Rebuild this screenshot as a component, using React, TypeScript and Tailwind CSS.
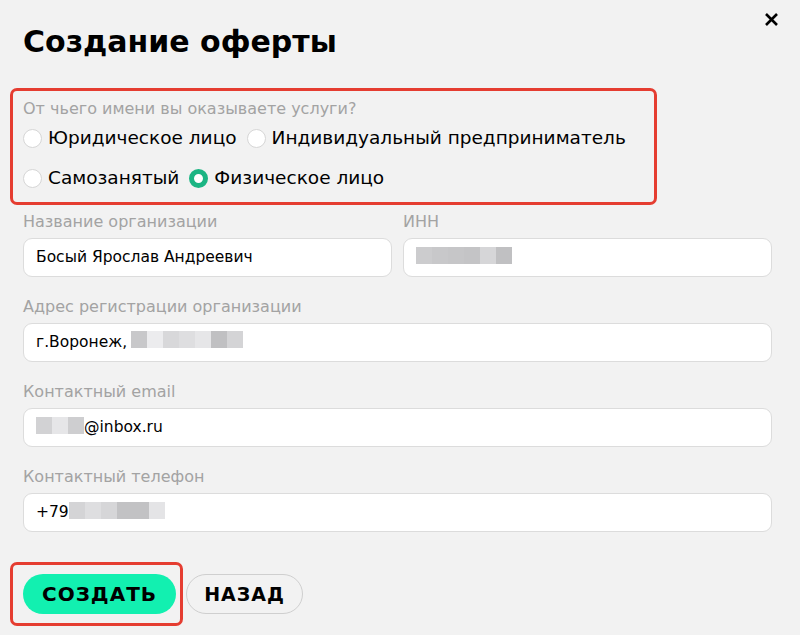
import { useState } from "react";

type Field = {
    key: string;
    label: string;
    value?: string;
};

// pixelated "hidden" chunks in the reference
const Blur = ({ cells }: { cells: number[] }) => (
    <span className="inline-flex align-middle h-[22px]">
        {cells.map((c, i) => (
            <span
                key={i}
                className="w-4 h-[17px] self-start"
                style={{ background: `rgb(${c},${c},${c + 2})` }}
            />
        ))}
    </span>
);

function Input({ field, wide }: { field: Field; wide?: boolean }) {
    return (
        <div className={`flex flex-col ${wide ? "w-full" : "flex-1"}`}>
            <label className="text-[16px] leading-[22px] text-[#a3a3a3] mb-[5px]">{field.label}</label>
            <div className="h-[39px] bg-white border border-[#dcdcdc] rounded-[9px] px-3 flex items-center text-[15.5px] text-black">
                {field.key === "inn" && <Blur cells={[204, 200, 198, 196, 214, 192]} />}
                {field.key === "address" && (
                    <>
                        <span>{field.value}</span>
                        <span className="ml-[4px]"><Blur cells={[200, 236, 216, 222, 230, 192, 212]} /></span>
                    </>
                )}
                {field.key === "email" && (
                    <>
                        <Blur cells={[210, 230, 206]} />
                        <span>@inbox.ru</span>
                    </>
                )}
                {field.key === "phone" && (
                    <>
                        <span>+79</span>
                        <Blur cells={[212, 222, 214, 194, 194, 228]} />
                    </>
                )}
                {field.key === "name" && <span>{field.value}</span>}
            </div>
        </div>
    );
}

function Radio({ checked, label, onClick }: { checked: boolean; label: string; onClick: () => void }) {
    return (
        <button className="flex items-center gap-[6px] text-[18.5px] text-black" onClick={onClick}>
            {checked ? (
                <span className="w-[19px] h-[19px] rounded-full border-[5px] border-[#1bb583] bg-white" />
            ) : (
                <span className="w-[19px] h-[19px] rounded-full border border-[#d6d6d6] bg-white" />
            )}
            <span>{label}</span>
        </button>
    );
}

export default function App() {
    const [type, setType] = useState("physical");

    const fields: Record<string, Field> = {
        name: { key: "name", label: "Название организации", value: "Босый Ярослав Андреевич" },
        inn: { key: "inn", label: "ИНН" },
        address: { key: "address", label: "Адрес регистрации организации", value: "г.Воронеж," },
        email: { key: "email", label: "Контактный email" },
        phone: { key: "phone", label: "Контактный телефон" },
    };

    return (
        <div
            className="relative w-[800px] h-[635px] bg-[#f2f2f2] px-[23px] overflow-hidden"
            style={{ fontFamily: '"DejaVu Sans", "Noto Sans", sans-serif' }}
        >
            <button className="absolute right-[21px] top-[12px] text-black">
                <svg width="15" height="15" viewBox="0 0 15 15">
                    <path d="M2 2L13 13M13 2L2 13" stroke="black" strokeWidth="2.6" />
                </svg>
            </button>

            <h1 className="pt-[22px] text-[30px] leading-[40px] font-bold text-black">
                Создание оферты
            </h1>

            {/* Who provides services */}
            <div className="mt-[26px] -mx-[13px] w-[647px] border-[3px] border-[#e53d31] rounded-[7px] px-[10px] pt-[7px] pb-[9px]">
                <div className="text-[16px] leading-[22px] text-[#a3a3a3]">От чьего имени вы оказываете услуги?</div>
                <div className="flex gap-[10px] mt-[3px] h-[30px]">
                    <Radio checked={type === "legal"} label="Юридическое лицо" onClick={() => setType("legal")} />
                    <Radio checked={type === "ip"} label="Индивидуальный предприниматель" onClick={() => setType("ip")} />
                </div>
                <div className="flex gap-[10px] mt-[10px] h-[30px]">
                    <Radio checked={type === "self"} label="Самозанятый" onClick={() => setType("self")} />
                    <Radio checked={type === "physical"} label="Физическое лицо" onClick={() => setType("physical")} />
                </div>
            </div>

            <div className="flex flex-col gap-[19px] mt-[6px] w-[749px]">
                <div className="flex gap-[11px]">
                    <Input field={fields.name} />
                    <Input field={fields.inn} />
                </div>
                <Input field={fields.address} wide />
                <Input field={fields.email} wide />
                <Input field={fields.phone} wide />
            </div>

            <div className="flex items-center gap-[3px] mt-[30px] -ml-[13px]">
                <div className="border-[3px] border-[#e53d31] rounded-[7px] pl-[10px] pr-[4px] py-[9px]">
                    <button className="h-[40px] w-[153px] rounded-full bg-[#12f0b0] text-[20px] font-bold tracking-[1px] text-black">
                        СОЗДАТЬ
                    </button>
                </div>
                <button className="h-[40px] w-[117px] rounded-full border border-[#cfcfcf] text-[19px] font-bold tracking-[1px] text-black">
                    НАЗАД
                </button>
            </div>
        </div>
    );
}
